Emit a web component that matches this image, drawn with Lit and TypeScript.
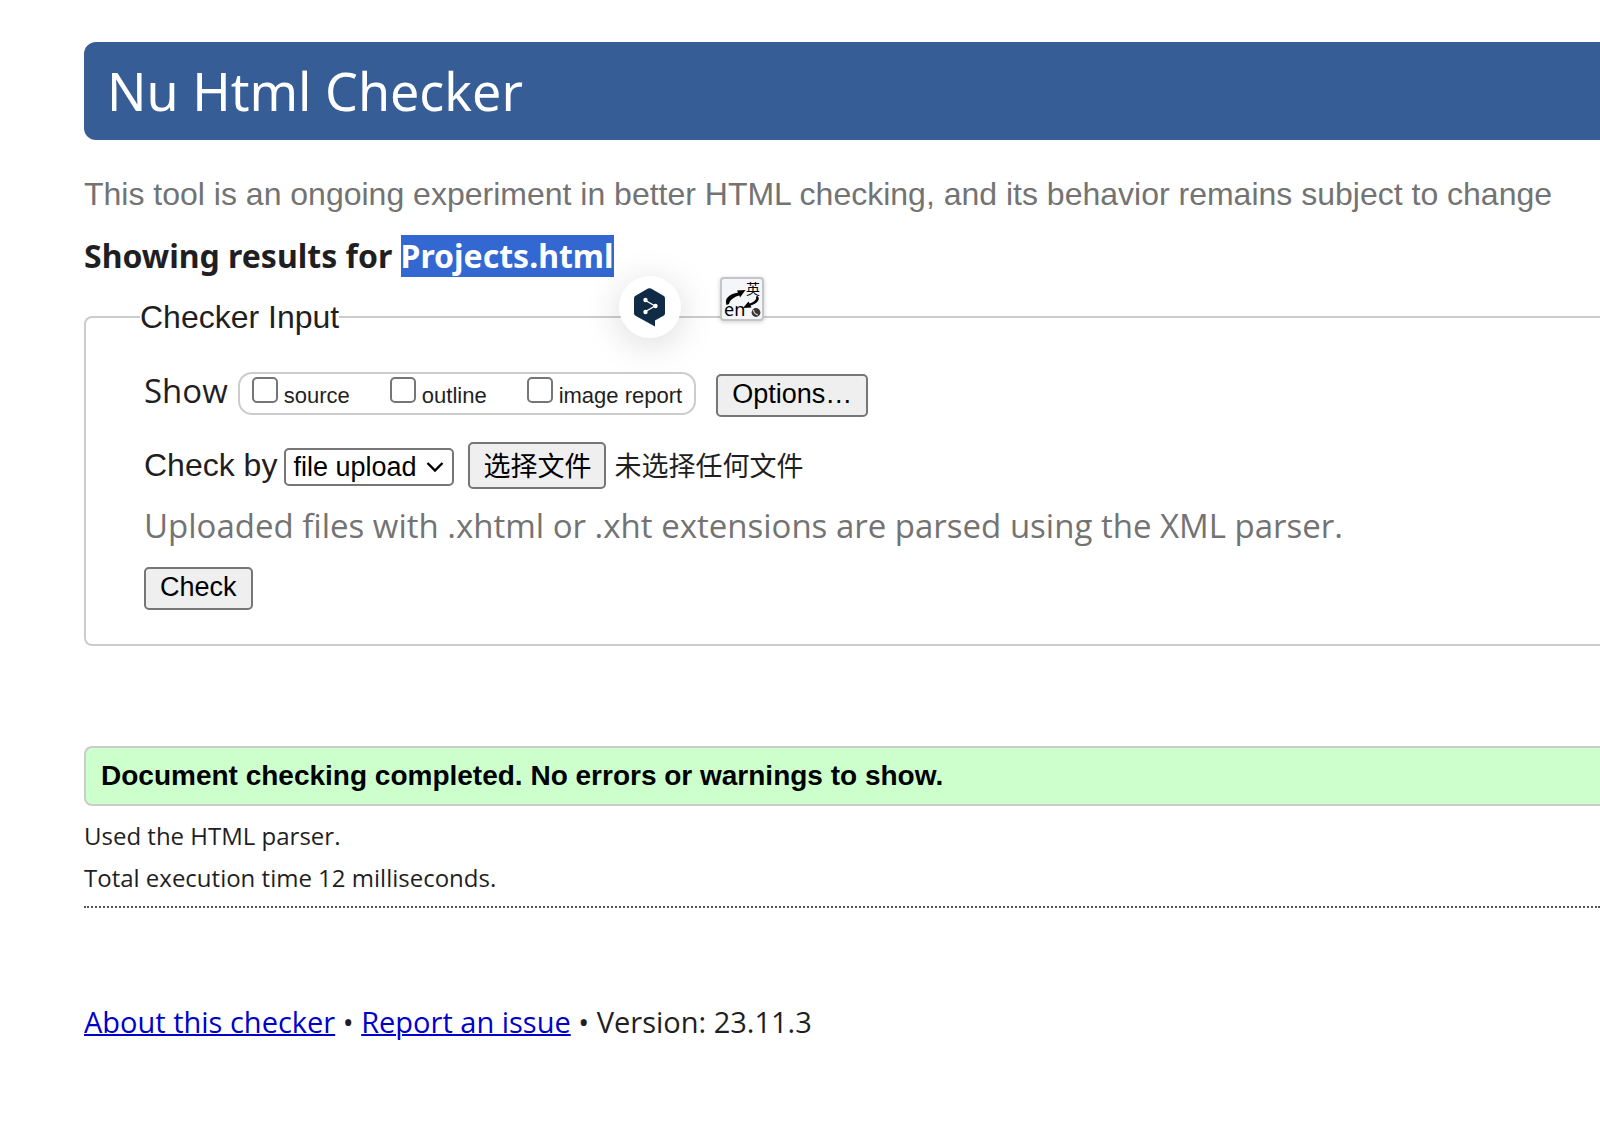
import { LitElement, html, css } from "lit";
import { customElement, query, state } from "lit/decorators.js";

@customElement("app-root")
export class AppRoot extends LitElement {
  static styles = css`
    :host {
      display: block;
      box-sizing: border-box;
      overflow-x: hidden;
      background: #fff;
      color: #1f1f23;
      font-family: "Open Sans", "Noto Sans CJK SC", sans-serif;
      font-size: 33px;
      line-height: 42px;
    }
    * {
      box-sizing: border-box;
    }
    .page {
      position: relative;
      padding: 42px 0 60px 84px;
    }
    .banner {
      padding: 0 23px;
      border-radius: 12px 0 0 12px;
      background: #365d95;
    }
    .title {
      margin: 0;
      color: #fff;
      font-family: "Noto Sans", sans-serif;
      font-size: 52px;
      font-weight: 400;
      line-height: 98px;
    }
    .notice {
      margin: 33px 0 0;
      color: #737373;
      font-family: "Liberation Sans", sans-serif;
      font-size: 32px;
      white-space: nowrap;
    }
    .heading {
      margin: 20px 0 0;
      font-family: "Noto Sans", sans-serif;
      font-size: 32px;
      font-weight: 700;
      white-space: nowrap;
    }
    .selected {
      display: inline-block;
      background: #3367d1;
      color: #fff;
    }
    .checker {
      min-width: 0;
      margin: 22px 0 0;
      padding: 34px 0 34px 58px;
      border: 2px solid #ccc;
      border-right: 0;
      border-radius: 8px 0 0 8px;
    }
    .legend {
      margin-left: -4px;
      padding: 0;
      font-family: "Liberation Sans", sans-serif;
      font-size: 32px;
      line-height: 36px;
    }
    .row {
      display: flex;
      align-items: baseline;
      line-height: 44px;
      white-space: nowrap;
    }
    .row-source {
      margin-top: 25px;
    }
    .options {
      display: flex;
      gap: 40px;
      margin: 0 20px 0 10px;
      padding: 3px 12px 0;
      border: 2px solid #ccc;
      border-radius: 14px;
    }
    .option {
      display: flex;
      align-items: baseline;
      gap: 6px;
      font-family: "Liberation Sans", sans-serif;
      font-size: 22px;
      line-height: 35px;
    }
    .box {
      appearance: none;
      width: 26px;
      height: 26px;
      margin: 0;
      border: 2px solid #767676;
      border-radius: 5px;
      background: #fff;
    }
    .box:checked {
      background: #3367d1;
    }
    .button,
    .select {
      appearance: none;
      margin: 0;
      border: 2px solid #767676;
      border-radius: 5px;
      color: #000;
      font-family: "Liberation Sans", "Noto Sans CJK SC", sans-serif;
      font-size: 27px;
    }
    .button {
      padding: 3px 14px 5px;
      background: #efefef;
      line-height: 31px;
    }
    .button-file {
      margin: 0 8px 0 14px;
      padding: 6px 13px 2px;
      line-height: 35px;
    }
    .method-label {
      font-family: "Liberation Sans", sans-serif;
      font-size: 32px;
    }
    .select-wrap {
      position: relative;
      display: flex;
      margin-left: 7px;
    }
    .select {
      height: 38px;
      padding: 0 35px 0 7px;
      background: #fff;
      line-height: 34px;
    }
    .chevron {
      position: absolute;
      right: 10px;
      top: 50%;
      width: 18px;
      height: 12px;
      margin-top: -6px;
      pointer-events: none;
    }
    .file-name {
      font-family: "Liberation Sans", "Noto Sans CJK SC", sans-serif;
      font-size: 27px;
    }
    .hint {
      margin: 15px 0 19px;
      color: #737373;
      line-height: 44px;
      white-space: nowrap;
    }
    .success {
      margin: 100px 0 0;
      padding: 0 15px;
      border: 2px solid #ccc;
      border-right: 0;
      border-radius: 8px 0 0 8px;
      background: #cfc;
      color: #000;
      font-family: "Liberation Sans", sans-serif;
      font-size: 28px;
      font-weight: 700;
      line-height: 56px;
    }
    .details {
      margin-top: 9px;
      padding-bottom: 7px;
      border-bottom: 2px dotted #555;
      font-size: 24px;
    }
    .detail {
      margin: 0;
    }
    .footer {
      margin-top: 93px;
      font-size: 29px;
    }
    .link {
      color: #00c;
      text-decoration-thickness: 2px;
    }
    .floating {
      position: absolute;
      padding: 0;
      border: 0;
    }
    .bubble {
      left: 619px;
      top: 276px;
      width: 62px;
      height: 62px;
      border-radius: 50%;
      background: #fff;
      box-shadow: 0 6px 36px rgba(0, 0, 0, 0.15);
    }
    .translate {
      left: 720px;
      top: 277px;
      width: 44px;
      height: 44px;
      border: 2px solid #c3c5c7;
      border-radius: 4px;
      background: #f4f6f9;
      box-shadow: 0 1px 4px rgba(0, 0, 0, 0.2);
    }
    .icon {
      display: block;
      width: 100%;
      height: 100%;
      overflow: visible;
    }
    .glyph-en {
      font: 18px "Noto Sans", sans-serif;
    }
    .glyph-cjk {
      font: 14px "Noto Sans CJK SC", sans-serif;
    }
  `;

  @state() private fileName = "未选择任何文件";
  @query("#upload") private upload!: HTMLInputElement;

  private onFile() {
    this.fileName = this.upload.files?.[0]?.name ?? "未选择任何文件";
  }

  private option(id: string) {
    return html`<label class="option"
      ><input class="box" type="checkbox" /><span>${id}</span></label
    >`;
  }

  render() {
    return html`
      <main class="page">
        <header class="banner"><h1 class="title">Nu Html Checker</h1></header>
        <p class="notice">
          This tool is an ongoing experiment in better HTML checking, and its behavior remains subject to change
        </p>
        <h2 class="heading">Showing results for <span class="selected">Projects.html</span></h2>
        <form @submit=${(e: Event) => e.preventDefault()}>
          <fieldset class="checker">
            <legend class="legend">Checker Input</legend>
            <div class="row">
              <span>Show</span>
              <div class="options">${["source", "outline", "image report"].map((o) => this.option(o))}</div>
              <button class="button" type="button">Options…</button>
            </div>
            <div class="row row-source">
              <label class="method-label" for="method">Check by</label>
              <div class="select-wrap">
                <select class="select" id="method">
                  <option>file upload</option>
                </select>
                <svg class="chevron" viewBox="0 0 18 12" aria-hidden="true">
                  <path d="M1.5 2 9 9.5 16.5 2" fill="none" stroke="#000" stroke-width="2.4" />
                </svg>
              </div>
              <button class="button button-file" type="button" @click=${() => this.upload.click()}>选择文件</button>
              <input id="upload" type="file" hidden @change=${this.onFile} />
              <label class="file-name" for="upload">${this.fileName}</label>
            </div>
            <p class="hint">Uploaded files with .xhtml or .xht extensions are parsed using the XML parser.</p>
            <div class="row"><button class="button" type="submit">Check</button></div>
          </fieldset>
        </form>
        <p class="success">Document checking completed. No errors or warnings to show.</p>
        <div class="details">
          <p class="detail">Used the HTML parser.</p>
          <p class="detail">Total execution time 12 milliseconds.</p>
        </div>
        <footer class="footer">
          <a class="link" href="#about">About this checker</a> • <a class="link" href="#issue">Report an issue</a> •
          Version: 23.11.3
        </footer>
        <button class="floating bubble" type="button">
          <svg class="icon" viewBox="0 0 62 62" aria-hidden="true">
            <path
              d="M29 12.6Q30.5 11.8 32 12.6L44.5 19.8Q46 20.7 46 22.4V37.2Q46 38.9 44.5 39.8L36 44.5V50.5L16.5 39.8Q15 38.9 15 37.2V22.4Q15 20.7 16.5 19.8Z"
              fill="#0f2b46"
            />
            <path d="M26.5 24.5 36 30 26.5 35.5" fill="none" stroke="#fff" stroke-width="1.4" />
            <g fill="#fff">
              <circle cx="26.5" cy="24" r="2.2" />
              <circle cx="36.5" cy="30" r="2.2" />
              <circle cx="26.5" cy="36" r="2.2" />
            </g>
          </svg>
        </button>
        <button class="floating translate" type="button">
          <svg class="icon" viewBox="0 0 40 40" aria-hidden="true">
            <text class="glyph-en" x="2" y="37">en</text>
            <text class="glyph-cjk" x="24" y="15">英</text>
            <path d="M4.5 26C2 19 8 15 16 13.5L15 11.5 23.5 11 18 18.5 17.500 16.5C12 18 8 20.5 7 25Z" />
            <path d="M35.5 17C39 20 35 25 28.5 26.5L29.5 28.5 21 29 26.5 22.5 27.5 24.5C32 23 35 20.5 34 17.5Z" />
            <circle cx="34" cy="33.5" r="4.4" fill="#3a3532" />
            <path d="M31.5 31Q32 35 36 36" fill="none" stroke="#ddd" stroke-width="1.2" />
          </svg>
        </button>
      </main>
    `;
  }
}
